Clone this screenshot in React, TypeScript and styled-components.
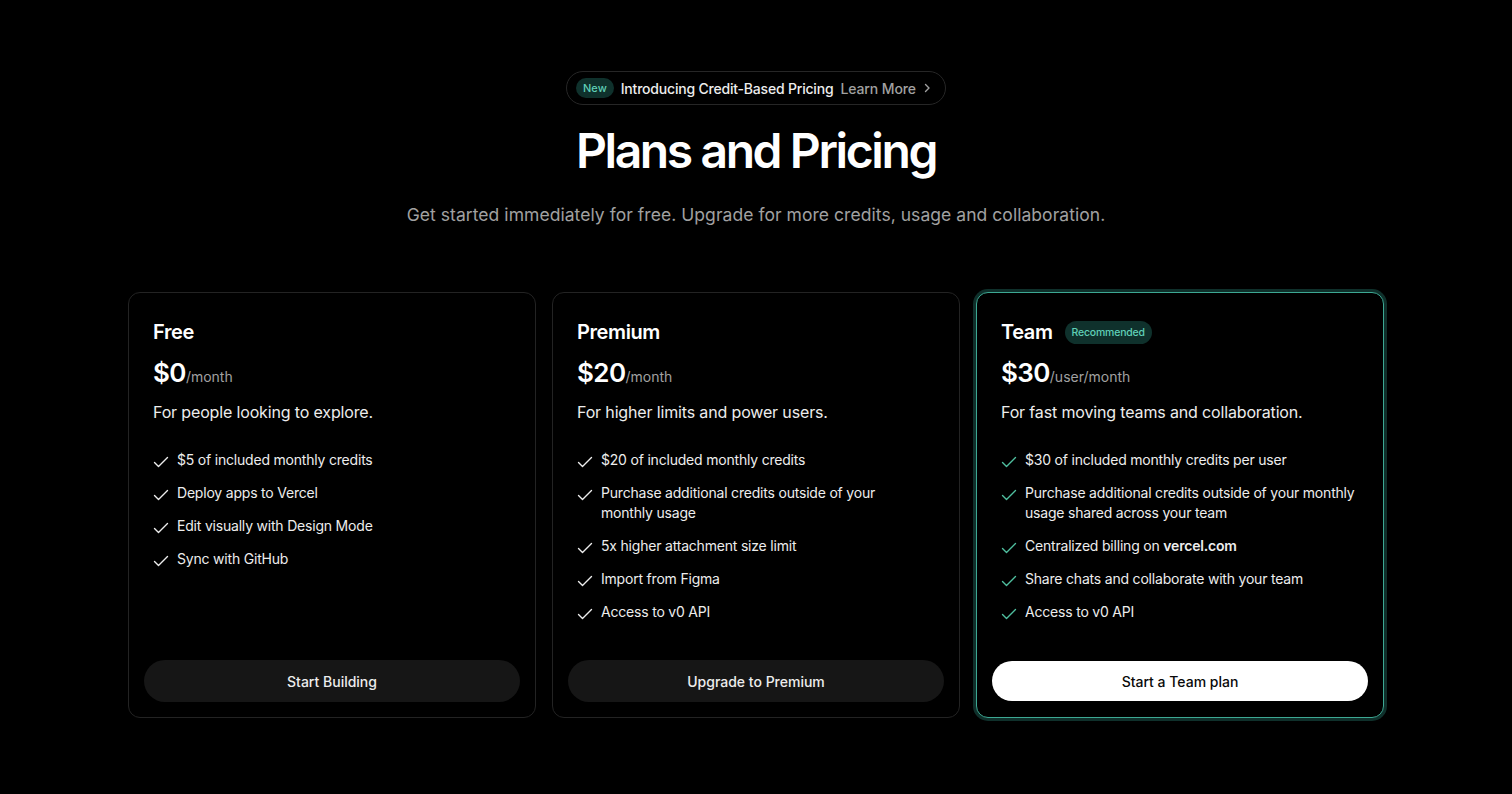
import React from "react";
import styled, { createGlobalStyle, css } from "styled-components";

const GlobalStyle = createGlobalStyle`
  html, body { margin: 0; padding: 0; background: #000; }
  body {
    font-family: Inter, "Noto Sans", "Liberation Sans", sans-serif;
    color: #ededed;
    -webkit-font-smoothing: antialiased;
  }
  * { box-sizing: border-box; }
`;

const Page = styled.main`
  min-height: 794px;
  display: flex;
  flex-direction: column;
  align-items: center;
  padding-top: 71px;
`;

const Announcement = styled.a`
  display: inline-flex;
  align-items: center;
  height: 34px;
  padding: 0 12px 0 9px;
  border: 1px solid #262626;
  border-radius: 999px;
  text-decoration: none;
  gap: 7px;
  font-size: 14px;
  font-weight: 500;
`;

const Tag = styled.span`
  display: inline-flex;
  align-items: center;
  height: 20px;
  padding: 0 7px;
  border-radius: 999px;
  background: #0f312c;
  color: #5fcfb6;
  font-size: 11px;
  font-weight: 500;
`;

const AnnounceText = styled.span`
  color: #ededed;
  letter-spacing: -0.2px;
`;

const LearnMore = styled.span`
  display: inline-flex;
  align-items: center;
  gap: 5px;
  color: #a1a1a1;
  letter-spacing: -0.1px;
`;

const Title = styled.h1`
  margin: 18px 0 0;
  font-size: 48px;
  line-height: 56px;
  font-weight: 600;
  letter-spacing: -2.4px;
  color: #fff;
`;

const Subtitle = styled.p`
  margin: 23px 0 0;
  font-size: 17.5px;
  line-height: 26px;
  color: #a1a1a1;
  letter-spacing: 0.05px;
`;

const Grid = styled.section`
  margin-top: 64px;
  display: grid;
  grid-template-columns: repeat(3, 408px);
  gap: 16px;
`;

const Card = styled.article<{ $featured?: boolean }>`
  height: 426px;
  border-radius: 12px;
  border: 1px solid #232323;
  background: #000;
  display: flex;
  flex-direction: column;
  padding: 24px 15px 15px;
  ${(p) =>
    p.$featured &&
    css`
      border: 1.5px solid #3da893;
      box-shadow: 0 0 0 3px #0f302b;
    `}
`;

const CardBody = styled.div`
  padding: 0 9px;
  flex: 1;
  display: flex;
  flex-direction: column;
`;

const NameRow = styled.div`
  display: flex;
  align-items: center;
  gap: 12px;
  height: 30px;
`;

const PlanName = styled.h2`
  margin: 0;
  font-size: 20px;
  font-weight: 600;
  letter-spacing: -0.4px;
  color: #fff;
`;

const Recommended = styled.span`
  display: inline-flex;
  align-items: center;
  height: 23px;
  padding: 0 7px;
  border-radius: 999px;
  background: #0f312c;
  color: #5fcfb6;
  font-size: 10.5px;
  font-weight: 500;
  letter-spacing: -0.2px;
`;

const PriceRow = styled.div`
  margin-top: 10px;
  display: flex;
  align-items: baseline;
  height: 34px;
`;

const Price = styled.span`
  font-size: 26px;
  font-weight: 600;
  letter-spacing: -0.6px;
  color: #fff;
`;

const Period = styled.span`
  font-size: 14px;
  color: #a1a1a1;
`;

const Description = styled.p`
  margin: 9px 0 0;
  font-size: 16px;
  line-height: 24px;
  color: #ededed;
  letter-spacing: -0.15px;
`;

const Features = styled.ul`
  list-style: none;
  margin: 26px 0 0;
  padding: 0;
  display: flex;
  flex-direction: column;
  gap: 13px;
`;

const Feature = styled.li`
  display: flex;
  gap: 8px;
  font-size: 14px;
  line-height: 20px;
  color: #ededed;
  letter-spacing: -0.2px;
`;

const CheckWrap = styled.span<{ $accent?: boolean }>`
  flex: none;
  width: 16px;
  height: 20px;
  display: flex;
  align-items: center;
  padding-top: 4px;
  color: ${(p) => (p.$accent ? "#4fbf9f" : "#ededed")};
`;

const Strong = styled.span`
  font-weight: 600;
`;

const Button = styled.button<{ $primary?: boolean }>`
  height: 42px;
  width: 100%;
  border: none;
  border-radius: 999px;
  font-family: inherit;
  font-size: 14px;
  font-weight: 500;
  cursor: pointer;
  background: ${(p) => (p.$primary ? "#fff" : "#161616")};
  color: ${(p) => (p.$primary ? "#0a0a0a" : "#ededed")};
  ${(p) => p.$primary && css`height: 40px; margin-bottom: 1px;`}
`;

const Check = () => (
  <svg width="16" height="16" viewBox="0 0 16 16" fill="none">
    <path d="M1.5 8.5 L5.5 12.5 L14.5 3.5" stroke="currentColor" strokeWidth="1.4" strokeLinecap="round" strokeLinejoin="round" />
  </svg>
);

const Chevron = () => (
  <svg width="12" height="12" viewBox="0 0 12 12" fill="none">
    <path d="M4.5 2.5 L8 6 L4.5 9.5" stroke="currentColor" strokeWidth="1.4" strokeLinecap="round" strokeLinejoin="round" />
  </svg>
);

type Plan = {
  name: string;
  price: string;
  period: string;
  desc: string;
  features: React.ReactNode[];
  cta: string;
  featured?: boolean;
};

const plans: Plan[] = [
  {
    name: "Free",
    price: "$0",
    period: "/month",
    desc: "For people looking to explore.",
    features: [
      "$5 of included monthly credits",
      "Deploy apps to Vercel",
      "Edit visually with Design Mode",
      "Sync with GitHub",
    ],
    cta: "Start Building",
  },
  {
    name: "Premium",
    price: "$20",
    period: "/month",
    desc: "For higher limits and power users.",
    features: [
      "$20 of included monthly credits",
      <>
        Purchase additional credits outside of your
        <br />
        monthly usage
      </>,
      "5x higher attachment size limit",
      "Import from Figma",
      "Access to v0 API",
    ],
    cta: "Upgrade to Premium",
  },
  {
    name: "Team",
    price: "$30",
    period: "/user/month",
    desc: "For fast moving teams and collaboration.",
    features: [
      "$30 of included monthly credits per user",
      "Purchase additional credits outside of your monthly usage shared across your team",
      <>
        Centralized billing on <Strong>vercel.com</Strong>
      </>,
      "Share chats and collaborate with your team",
      "Access to v0 API",
    ],
    cta: "Start a Team plan",
    featured: true,
  },
];

export default function App() {
  return (
    <>
      <GlobalStyle />
      <Page>
        <Announcement href="#">
          <Tag>New</Tag>
          <AnnounceText>Introducing Credit-Based Pricing</AnnounceText>
          <LearnMore>
            Learn More <Chevron />
          </LearnMore>
        </Announcement>
        <Title>Plans and Pricing</Title>
        <Subtitle>
          Get started immediately for free. Upgrade for more credits, usage and collaboration.
        </Subtitle>
        <Grid>
          {plans.map((plan) => (
            <Card key={plan.name} $featured={plan.featured}>
              <CardBody>
                <NameRow>
                  <PlanName>{plan.name}</PlanName>
                  {plan.featured && <Recommended>Recommended</Recommended>}
                </NameRow>
                <PriceRow>
                  <Price>{plan.price}</Price>
                  <Period>{plan.period}</Period>
                </PriceRow>
                <Description>{plan.desc}</Description>
                <Features>
                  {plan.features.map((f, i) => (
                    <Feature key={i}>
                      <CheckWrap $accent={plan.featured}>
                        <Check />
                      </CheckWrap>
                      <span>{f}</span>
                    </Feature>
                  ))}
                </Features>
              </CardBody>
              <Button $primary={plan.featured}>{plan.cta}</Button>
            </Card>
          ))}
        </Grid>
      </Page>
    </>
  );
}
